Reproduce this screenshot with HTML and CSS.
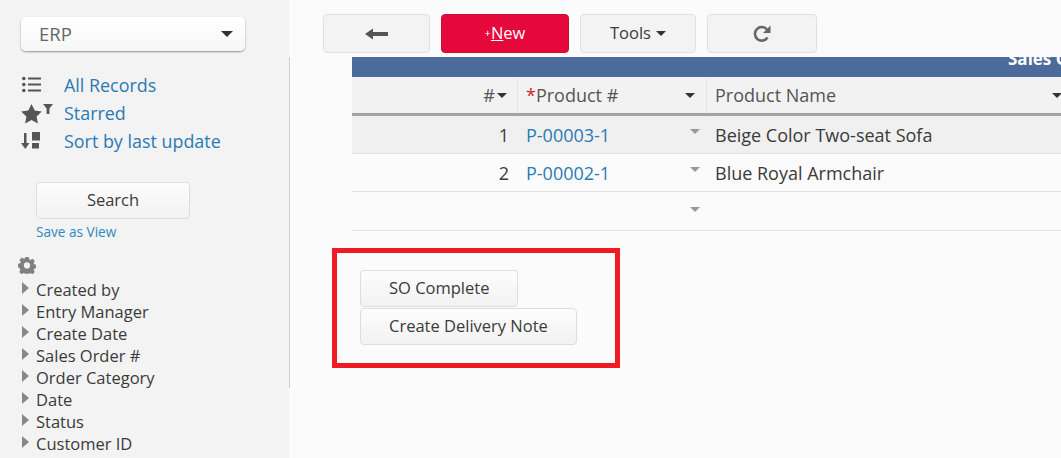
FILE: index.html
```html
<!DOCTYPE html>
<html lang="en">
<head>
<meta charset="utf-8">
<title>ERP</title>
<link rel="stylesheet" href="styles.css">
</head>
<body>
<div class="page">
  <aside class="sidebar">
    <div class="select"><span>ERP</span><i class="caret caret-lg"></i></div>
    <ul class="views">
      <li><svg class="vicon" width="22" height="18" viewBox="0 0 22 18"><g fill="#555"><circle cx="2.800" cy="2.500" r="1.800"/><circle cx="2.800" cy="8.500" r="1.800"/><circle cx="2.800" cy="14.500" r="1.800"/><rect x="7" y="1.500" width="13" height="2"/><rect x="7" y="7.500" width="13" height="2"/><rect x="7" y="13.500" width="13" height="2"/></g></svg><a>All Records</a></li>
      <li><svg class="vicon" width="34" height="24" viewBox="0 0 34 24"><g fill="#555"><path d="M10.500 3l3.200 6.400 7.100 1-5.200 5 1.300 7.100-6.400-3.400-6.400 3.400 1.300-7.100-5.200-5 7.100-1z"/><path d="M22 3h10l-3.600 4.500V13h-2.800V7.500z"/></g></svg><a>Starred</a></li>
      <li><svg class="vicon" width="22" height="20" viewBox="0 0 22 20"><g fill="#555"><rect x="3" y="2" width="2.500" height="12"/><path d="M0 12h8.500l-4.250 6z"/><rect x="11" y="1" width="8" height="8.500"/><rect x="11" y="12" width="7" height="5.500"/></g></svg><a>Sort by last update</a></li>
    </ul>
    <button class="btn search">Search</button>
    <a class="save">Save as View</a>
    <svg class="gear" width="18" height="18" viewBox="0 0 18 18"><path fill="#808080" fill-rule="evenodd" d="M7.300 1h3.400l.5 2.300 1.300.6 2-1.200 2.300 2.400-1.200 2 .5 1.200 2.200.6v3.200l-2.200.6-.5 1.200 1.200 2-2.300 2.400-2-1.200-1.300.6-.5 0H7.300l-.5-.1-1.300-.5-2 1.200-2.300-2.400 1.200-2-.5-1.200L0 11V7.800l2.200-.6.500-1.200-1.200-2 2.300-2.400 2 1.200 1.300-.6zM9 6.300a3.100 3.100 0 1 0 0 6.200 3.100 3.100 0 0 0 0-6.200z"/></svg>
    <ul class="tree">
      <li>Created by</li>
      <li>Entry Manager</li>
      <li>Create Date</li>
      <li>Sales Order #</li>
      <li>Order Category</li>
      <li>Date</li>
      <li>Status</li>
      <li>Customer ID</li>
    </ul>
  </aside>
  <main class="main">
    <div class="toolbar">
      <button class="tbtn back"><svg width="24" height="12" viewBox="0 0 24 12"><path fill="#555" d="M0 6l8-5.500V4h15v4H8v3.500z"/></svg></button>
      <button class="tbtn new"><small>+</small><u>N</u>ew</button>
      <button class="tbtn tools">Tools <i class="caret"></i></button>
      <button class="tbtn refresh"><svg width="20" height="20" viewBox="0 0 20 20"><path fill="none" stroke="#666" stroke-width="2.600" d="M15.500 13.500A6.800 6.800 0 1 1 15 5.500"/><path fill="#666" d="M18.500 1.500v7.500H11z"/></svg></button>
    </div>
    <section class="grid">
      <div class="band"><span>Sales Order Details</span></div>
      <div class="row head">
        <div class="c c-num">#<i class="caret"></i></div>
        <div class="c c-prod"><span><em>*</em>Product #</span><i class="caret"></i></div>
        <div class="c c-name"><span>Product Name</span><i class="caret"></i></div>
      </div>
      <div class="row odd">
        <div class="c c-num">1</div>
        <div class="c c-prod"><a>P-00003-1</a><i class="caret caret-soft"></i></div>
        <div class="c c-name">Beige Color Two-seat Sofa</div>
      </div>
      <div class="row">
        <div class="c c-num">2</div>
        <div class="c c-prod"><a>P-00002-1</a><i class="caret caret-soft"></i></div>
        <div class="c c-name">Blue Royal Armchair</div>
      </div>
      <div class="row last">
        <div class="c c-num"></div>
        <div class="c c-prod"><i class="caret caret-soft"></i></div>
        <div class="c c-name"></div>
      </div>
    </section>
    <div class="callout">
      <button class="btn">SO Complete</button>
      <button class="btn">Create Delivery Note</button>
    </div>
  </main>
</div>
</body>
</html>
```
FILE: styles.css
```css
* { box-sizing: border-box; }
html, body { margin: 0; height: 100%; overflow: hidden; }
body { font-family: "Open Sans", sans-serif; color: #333; background: #fbfbfb; }
ul { list-style: none; margin: 0; padding: 0; }
.page { display: flex; width: 1061px; height: 458px; overflow: hidden; }

.sidebar { width: 289px; flex: none; height: 458px; background: #f3f3f3; padding: 17px 0 0 21px; position: relative; }
.sidebar::after { content: ""; position: absolute; right: -1px; top: 57px; height: 331px; width: 1px; background: #d0d0d0; }
.select { width: 224px; height: 34px; background: linear-gradient(#fff, #f7f7f7); border-radius: 5px; box-shadow: 0 1px 2px rgba(0,0,0,.4); display: flex; align-items: center; justify-content: space-between; padding: 0 12px 2px 18px; font-size: 18.500px; color: #666; }
.caret { display: inline-block; width: 0; height: 0; border-left: 5px solid transparent; border-right: 5px solid transparent; border-top: 5px solid #333; }
.caret-lg { border-left-width: 6px; border-right-width: 6px; border-top-width: 6px; margin-top: 2px; }
.caret-soft { border-top-color: #999; }

.views { margin-top: 20px; }
.views li { height: 28px; display: flex; align-items: center; font-size: 17.900px; position: relative; padding-left: 43px; }
.views a { color: #2a7ab5; }
.vicon { position: absolute; left: 0; top: 50%; transform: translateY(-50%); }

.btn { display: block; font-family: inherit; font-size: 16.500px; color: #3a3a3a; height: 37px; padding: 0 28px 2px; border: 1px solid #ddd; border-radius: 4px; background: linear-gradient(#fdfdfd, #f2f2f2); text-align: center; }
.search { width: 154px; margin: 27px 0 0 15px; padding: 0 0 2px; }
.save { display: block; margin: 4px 0 0 15px; font-size: 13.600px; line-height: 18px; color: #2a8bc0; }
.gear { display: block; margin: 15px 0 0 -3px; }
.tree { margin-top: 5px; }
.tree li { height: 22px; line-height: 22px; font-size: 16.500px; padding-left: 15px; position: relative; color: #3a3a3a; }
.tree li::before { content: ""; position: absolute; left: 1px; top: 3px; border-top: 6px solid transparent; border-bottom: 6px solid transparent; border-left: 7px solid #888; }

.main { flex: 1; min-width: 0; padding: 14px 0 0 34px; }
.toolbar { display: flex; gap: 11px; height: 43px; }
.tbtn { height: 39px; font-family: inherit; font-size: 16.500px; color: #3a3a3a; background: #f3f3f3; border: 1px solid #e0e0e0; border-radius: 4px; display: flex; align-items: center; justify-content: center; gap: 5px; padding: 0 0 3px; }
.tbtn svg, .tbtn .caret { margin-top: 3px; }
.back { width: 107px; }
.new { width: 128px; gap: 0; background: #e6083a; border-color: #c8102e; color: #fff; }
.new small { font-size: 11px; }
.tools { width: 116px; }
.refresh { width: 110px; }

.grid { margin-left: 29px; width: 760px; }
.band { height: 20px; background: #4c6a9a; color: #fff; font-size: 17px; font-weight: 700; line-height: 4px; overflow: hidden; white-space: nowrap; padding-left: 656px; }
.row { display: flex; height: 38px; border-bottom: 1px solid #e2e2e2; font-size: 18px; color: #3a3a3a; }
.row.last { height: 39px; }
.row.odd { background: #f0f0f0; }
.row.head { height: 39px; background: #f2f2f2; border-bottom: 3px solid #a3a3a3; color: #555; }
.c { display: flex; align-items: center; }
.c-num { width: 165px; justify-content: flex-end; padding-right: 8px; }
.c-prod { width: 189px; padding: 0 6px 0 9px; justify-content: space-between; }
.c-name { width: 358px; padding: 0 2px 0 9px; justify-content: space-between; }
.head .c-num { gap: 2px; padding-right: 10px; }
.head .c-prod { border-left: 1px solid #e4e4e4; padding: 0 11px 0 8px; }
.head .c-name { border-left: 1px solid #e4e4e4; padding-left: 8px; }
.c-prod a { color: #2a7ab5; }
.c-prod .caret-soft { margin-left: auto; margin-top: -6px; }
.last .caret-soft { margin-top: -3px; }
.c em { color: #d8232a; font-style: normal; }

.callout { width: 288px; height: 120px; margin: 17px 0 0 9px; border: 5px solid #ed1c24; padding: 17px 0 0 23px; display: flex; flex-direction: column; align-items: flex-start; gap: 1px; background: #fbfbfb; }
```
